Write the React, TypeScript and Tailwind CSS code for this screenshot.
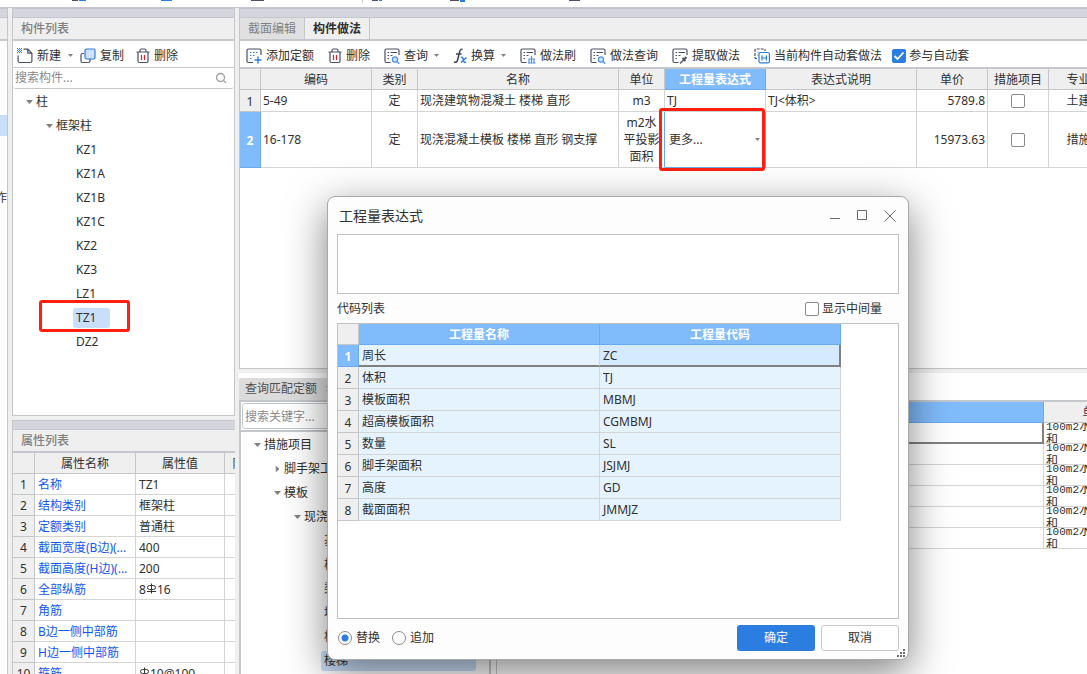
import { useState, type ReactNode } from "react";
import clsx from "clsx";

/* ----------------------------------------
   DATA
----------------------------------------- */

type TreeNode = {
  label: string;
  depth: number;
  state?: "open" | "closed";
};

const componentTree: TreeNode[] = [
  { label: "柱", depth: 0, state: "open" },
  { label: "框架柱", depth: 1, state: "open" },
  { label: "KZ1", depth: 2 },
  { label: "KZ1A", depth: 2 },
  { label: "KZ1B", depth: 2 },
  { label: "KZ1C", depth: 2 },
  { label: "KZ2", depth: 2 },
  { label: "KZ3", depth: 2 },
  { label: "LZ1", depth: 2 },
  { label: "TZ1", depth: 2 },
  { label: "DZ2", depth: 2 },
];

const quotaTree: TreeNode[] = [
  { label: "措施项目", depth: 0, state: "open" },
  { label: "脚手架工程", depth: 1, state: "closed" },
  { label: "模板", depth: 1, state: "open" },
  { label: "现浇混凝土模板", depth: 2, state: "open" },
  { label: "基础", depth: 3 },
  { label: "柱", depth: 3 },
  { label: "梁", depth: 3 },
  { label: "墙", depth: 3 },
  { label: "板", depth: 3 },
  { label: "楼梯", depth: 3 },
];

const properties: { name: string; value: ReactNode }[] = [
  { name: "名称", value: "TZ1" },
  { name: "结构类别", value: "框架柱" },
  { name: "定额类别", value: "普通柱" },
  { name: "截面宽度(B边)(...", value: "400" },
  { name: "截面高度(H边)(...", value: "200" },
  { name: "全部纵筋", value: <>8<RebarMark />16</> },
  { name: "角筋", value: "" },
  { name: "B边一侧中部筋", value: "" },
  { name: "H边一侧中部筋", value: "" },
  { name: "箍筋", value: <><RebarMark />10@100</> },
];

const codes = [
  ["周长", "ZC"],
  ["体积", "TJ"],
  ["模板面积", "MBMJ"],
  ["超高模板面积", "CGMBMJ"],
  ["数量", "SL"],
  ["脚手架面积", "JSJMJ"],
  ["高度", "GD"],
  ["截面面积", "JMMJZ"],
];

const indents = ["pl-[13px]", "pl-[33px]", "pl-[53px]", "pl-[73px]"];

/* ----------------------------------------
   ICONS
----------------------------------------- */

function Svg({ w = 16, children }: { w?: number; children: ReactNode }) {
  return (
    <svg
      width={w}
      height="16"
      viewBox={`0 0 ${w} 16`}
      fill="none"
      stroke="#4a4f66"
      strokeWidth="1.2"
      className="shrink-0"
      aria-hidden="true"
    >
      {children}
    </svg>
  );
}

function RebarMark() {
  return (
    <svg width="11" height="12" viewBox="0 0 11 12" fill="none" stroke="#333" className="mb-1 inline-block">
      <path d="M5.500 0.500v10M1 8.500h9M3.500 2.500h4a2 2 0 0 1 0 4h-4a2 2 0 0 1 0-4" />
    </svg>
  );
}

function Caret({ className }: { className?: string }) {
  return (
    <svg width="7" height="4" viewBox="0 0 7 4" className={clsx("shrink-0", className)} aria-hidden="true">
      <path d="M0 0h7L3.500 4z" fill="#808080" />
    </svg>
  );
}

function MenuCaret({ className }: { className?: string }) {
  return (
    <svg width="5" height="3" viewBox="0 0 5 3" className={clsx("shrink-0", className)} aria-hidden="true">
      <path d="M0 0h5L2.500 3z" fill="#808080" />
    </svg>
  );
}

const NewIcon = () => (
  <Svg>
    <path d="M1.100 7.500v5.500q0 1.500 1.500 1.500h10.800q1.500 0 1.500-1.500V5.200L10.800 1.100H6.500M10.800 1.100v4.100h4.100" />
    <path d="M0 .5h5M0 2.500h5M0 4.500h5" stroke="#2b7de0" strokeWidth="1" strokeDasharray="1 1" />
    <path d="M1 1.500h4M1 3.500h4" stroke="#2b7de0" strokeWidth="1" strokeDasharray="1 1" />
  </Svg>
);

const CopyIcon = () => (
  <Svg>
    <path d="M4 5.500H2.500Q1 5.500 1 7v6q0 1.500 1.500 1.500h6q1.500 0 1.500-1.500v-2" />
    <rect x="5" y="1" width="10" height="10" rx="1.500" fill="#cfe2fb" stroke="#2b7de0" />
  </Svg>
);

const TrashIcon = () => (
  <Svg w={14}>
    <path d="M0.500 4h13M4 4V2.500Q4 1 5.500 1h3Q10 1 10 2.500V4M2 4v9q0 1.500 1.500 1.500h7Q12 14.500 12 13V4" />
    <path d="M5.500 7v5M8.500 7v5" stroke="#d6212b" />
  </Svg>
);

const AddQuotaIcon = () => (
  <Svg>
    <path d="M7 14.500H2.500Q1 14.500 1 13V2.500Q1 1 2.500 1h11Q15 1 15 2.500V7" />
    <path d="M4 4.500h9M4 7.500h6M4 10.500h3" stroke="#2b7de0" strokeDasharray="1.500 1.500" />
    <path d="M12 8.500v7M8.500 12h7" stroke="#2b7de0" strokeWidth="1.400" />
  </Svg>
);

// Shared page outline, each toolbar action adds its own badge in the corner.
function SheetIcon({ children }: { children: ReactNode }) {
  return (
    <Svg>
      <path d="M6.500 14.500H2.500Q1 14.500 1 13V2.500Q1 1 2.500 1h11Q15 1 15 2.500V7" />
      <path d="M3.500 4.500h1.500M6.500 4.500h6.500M3.500 7.500h1.500M6.500 7.500h2M3.500 10.500h1.500" strokeWidth="1" />
      {children}
    </Svg>
  );
}

const QueryIcon = () => (
  <SheetIcon>
    <circle cx="11" cy="11.500" r="2.600" stroke="#4a93ec" fill="#cfe2fb" />
    <path d="M13 13.500l2.200 2.200" stroke="#4a93ec" strokeWidth="1.500" />
  </SheetIcon>
);

const BrushIcon = () => (
  <SheetIcon>
    <path d="M11.500 8v3M8.500 11h6.500M9 11v4.500M11.500 11v4.500M14 11v4.500M8 15h7.500" stroke="#4a93ec" />
  </SheetIcon>
);

const PickIcon = () => (
  <SheetIcon>
    <path d="M8 15.500l4-4" />
    <path d="M10.500 10l3 3M12 11.500l2.500-2.500" strokeWidth="2" />
  </SheetIcon>
);

const AutoIcon = () => (
  <Svg>
    <path d="M3 10.500H2Q1 10.500 1 9.500V2Q1 1 2 1h8q1 0 1 1v1M3.500 4h1M3.500 7h1" strokeDasharray="3 1" />
    <rect x="5" y="4.500" width="10.400" height="10.400" rx="1.500" stroke="#2b7de0" fill="#fff" />
    <path d="M8 7.500v5M12.400 7.500v5M8 10h4.400" stroke="#2b7de0" />
  </Svg>
);

const FxIcon = () => (
  <Svg w={14}>
    <path d="M9.500 1.500Q7.500 0.500 6.700 3.500L4.600 12Q3.900 15.200 1 14M3 6h5.500" stroke="#3c4157" strokeWidth="1.500" />
    <path d="M8 9.500q1.500-.8 2.200 1.500l.8 2.500q.6 1.500 2 .5M13.500 9.500L8 14.500" stroke="#2b7de0" strokeWidth="1.500" />
  </Svg>
);

/* ----------------------------------------
   SMALL PARTS
----------------------------------------- */

function ToolButton({ icon, label, menu }: { icon: ReactNode; label: string; menu?: boolean }) {
  return (
    <button type="button" className="flex shrink-0 items-center gap-1 whitespace-nowrap">
      {icon}
      {label}
      {menu && <MenuCaret className="ml-[2px]" />}
    </button>
  );
}

function CheckBox({ label, hidden, checked }: { label: string; hidden?: boolean; checked?: boolean }) {
  return (
    <label className="inline-flex shrink-0 items-center gap-[3px] whitespace-nowrap align-middle">
      <span className="relative flex">
        <input
          type="checkbox"
          defaultChecked={checked}
          aria-label={label}
          className="peer size-[14px] appearance-none rounded-[2px] border border-[#8a8a8a] bg-white checked:border-[#2b7de0] checked:bg-[#2b7de0]"
        />
        <svg
          viewBox="0 0 14 14"
          className="pointer-events-none absolute inset-0 hidden size-[14px] peer-checked:block"
          fill="none"
          stroke="#fff"
          strokeWidth="1.800"
        >
          <path d="M2.500 7l3 3 6-6.500" />
        </svg>
      </span>
      {!hidden && label}
    </label>
  );
}

function Radio({ label, checked }: { label: string; checked?: boolean }) {
  return (
    <label className="flex items-center gap-1">
      <input
        type="radio"
        name="mode"
        defaultChecked={checked}
        className="size-[14px] appearance-none rounded-full border border-[#8a8a8a] bg-white checked:bg-[radial-gradient(circle,#2b7de0_3px,#fff_4px)]"
      />
      {label}
    </label>
  );
}

function Tree({ nodes, selected, wide }: { nodes: TreeNode[]; selected: string; wide?: boolean }) {
  return (
    <ul className="pt-px">
      {nodes.map((node) => (
        <li key={node.label + node.depth} className={clsx("flex h-6 items-center gap-[3px] whitespace-nowrap", indents[node.depth])}>
          {node.state === "open" && <Caret />}
          {node.state === "closed" && <Caret className="-rotate-90" />}
          {!node.state && <span className="w-[7px] shrink-0" />}
          {node.label === selected ? (
            <span
              className={clsx(
                "relative -ml-[3px] rounded-[3px] bg-[#c9dff9] py-[2px] pl-[3px]",
                wide ? "w-[155px]" : "pr-[14px]",
              )}
            >
              {node.label}
              {!wide && (
                <span className="absolute -top-2 -right-5 -bottom-1 -left-[34px] rounded-[3px] border-[3px] border-[#ff2010]" />
              )}
            </span>
          ) : (
            <span>{node.label}</span>
          )}
        </li>
      ))}
    </ul>
  );
}

function Grip() {
  return <div className="h-[10px] shrink-0 border-y border-[#c4c6cd] bg-[#d5d6dd]" />;
}

function PanelTitle({ children }: { children: ReactNode }) {
  return (
    <h2 className="h-[23px] shrink-0 border-b-2 border-[#c4c7cb] bg-[#efefef] pl-2 font-medium leading-[22px] text-[#808080]">
      {children}
    </h2>
  );
}

/* ----------------------------------------
   LEFT COLUMN
----------------------------------------- */

function ComponentList() {
  return (
    <section className="flex h-[408px] shrink-0 flex-col border-x border-b border-[#c4c6c9] bg-white">
      <Grip />
      <PanelTitle>构件列表</PanelTitle>
      <div className="flex h-[27px] shrink-0 items-center border-b border-[#c4c7cb] pt-[3px] pl-1">
        <ToolButton icon={<NewIcon />} label="新建" />
        <span className="px-[7px]">
          <MenuCaret />
        </span>
        <div className="flex gap-3">
          <ToolButton icon={<CopyIcon />} label="复制" />
          <ToolButton icon={<TrashIcon />} label="删除" />
        </div>
      </div>
      <div className="flex h-[21px] shrink-0 items-center rounded-[3px] border-b border-[#c4c7cb] pr-[7px]">
        <input aria-label="搜索构件" placeholder="搜索构件..." className="min-w-0 flex-1 px-[2px] outline-none placeholder:text-[#8a8a8a]" />
        <svg width="12" height="12" viewBox="0 0 12 12" fill="none" stroke="#a0a0a0" strokeWidth="1.300">
          <circle cx="5.500" cy="5.500" r="4" />
          <path d="M8.500 8.500l2.500 2.500" />
        </svg>
      </div>
      <Tree nodes={componentTree} selected="TZ1" />
    </section>
  );
}

const propHead = "h-[21px] border-r border-b border-[#c4c6c9] bg-[#efefef] p-0 pt-[2px] font-normal";
const propCell = "h-[21px] overflow-hidden border-r border-b border-[#d4d4d4] p-0 pt-[2px] pl-[3px] whitespace-nowrap";

function PropertyList() {
  return (
    <section className="min-h-0 flex-1 overflow-hidden border-l border-[#c4c6c9] bg-white">
      <Grip />
      <PanelTitle>属性列表</PanelTitle>
      <table className="w-[252px] table-fixed border-separate border-spacing-0">
        <colgroup>
          <col className="w-[22px]" />
          <col className="w-[101px]" />
          <col className="w-[89px]" />
          <col className="w-10" />
        </colgroup>
        <thead>
          <tr>
            <th className={propHead} />
            <th className={propHead}>属性名称</th>
            <th className={propHead}>属性值</th>
            <th className={propHead}>附加</th>
          </tr>
        </thead>
        <tbody>
          {properties.map((prop, i) => (
            <tr key={prop.name}>
              <th className={propHead}>{i + 1}</th>
              <td className={clsx(propCell, "text-[#1257f0]")}>{prop.name}</td>
              <td className={propCell}>
                <div className="h-4">{prop.value}</div>
              </td>
              <td className={propCell} />
            </tr>
          ))}
        </tbody>
      </table>
    </section>
  );
}

/* ----------------------------------------
   METHOD TABLE
----------------------------------------- */

const head = "h-[21px] border-r border-b border-[#c4c6c9] bg-[#efefef] p-0 pt-[2px] font-normal whitespace-nowrap";
const blueHead = "h-[21px] border-r border-b border-[#69a9ee] bg-[#80bbfb] p-0 pt-[2px] font-bold text-white";
const cell = "border-r border-b border-[#d4d4d4] p-0 px-[2px]";

function MethodTable() {
  return (
    <table className="w-[869px] table-fixed border-separate border-spacing-0">
      <colgroup>
        <col className="w-[21px]" />
        <col className="w-[111px]" />
        <col className="w-[46px]" />
        <col className="w-[201px]" />
        <col className="w-[46px]" />
        <col className="w-[101px]" />
        <col className="w-[151px]" />
        <col className="w-[71px]" />
        <col className="w-[61px]" />
        <col className="w-[60px]" />
      </colgroup>
      <thead>
        <tr>
          <th className={head} />
          <th className={head}>编码</th>
          <th className={head}>类别</th>
          <th className={head}>名称</th>
          <th className={head}>单位</th>
          <th className={blueHead}>工程量表达式</th>
          <th className={head}>表达式说明</th>
          <th className={head}>单价</th>
          <th className={head}>措施项目</th>
          <th className={head}>专业</th>
        </tr>
      </thead>
      <tbody>
        <tr className="h-[22px]">
          <th className={head}>1</th>
          <td className={cell}>5-49</td>
          <td className={clsx(cell, "text-center")}>定</td>
          <td className={cell}>现浇建筑物混凝土 楼梯 直形</td>
          <td className={clsx(cell, "text-center")}>m3</td>
          <td className={cell}>TJ</td>
          <td className={cell}>TJ&lt;体积&gt;</td>
          <td className={clsx(cell, "text-right")}>5789.8</td>
          <td className={clsx(cell, "text-center leading-none")}>
            <CheckBox label="措施项目 1" hidden />
          </td>
          <td className={clsx(cell, "text-center")}>土建</td>
        </tr>
        <tr className="h-14">
          <th className={blueHead}>2</th>
          <td className={cell}>16-178</td>
          <td className={clsx(cell, "text-center")}>定</td>
          <td className={cell}>现浇混凝土模板 楼梯 直形 钢支撑</td>
          <td className="border-r border-b border-r-[#69a9ee] border-b-[#d4d4d4] p-0 text-center leading-[17px]">
            m2水
            <br />
            平投影
            <br />
            面积
          </td>
          <td className="relative border-r border-b border-[#69a9ee] p-0">
            <select aria-label="工程量表达式" className="w-full appearance-none bg-white pl-1 outline-none">
              <option>更多...</option>
            </select>
            <span className="pointer-events-none absolute inset-y-0 right-[5px] flex items-center">
              <MenuCaret />
            </span>
            <span className="pointer-events-none absolute -inset-y-1 right-0 -left-[6px] rounded-[3px] border-[3px] border-[#ff2010]" />
          </td>
          <td className={cell} />
          <td className={clsx(cell, "text-right")}>15973.63</td>
          <td className={clsx(cell, "text-center leading-none")}>
            <CheckBox label="措施项目 2" hidden />
          </td>
          <td className={clsx(cell, "text-center")}>措施</td>
        </tr>
      </tbody>
    </table>
  );
}

function MethodPanel() {
  return (
    <section className="flex h-[361px] shrink-0 flex-col border-b border-l border-[#c4c6c9] bg-white">
      <Grip />
      <div className="flex h-[23px] shrink-0 border-b-2 border-[#c4c7cb] bg-[#efefef]">
        <button type="button" className="border-r border-[#c4c6c9] bg-[#e0e0e0] px-2 pt-px text-[#808080]">
          截面编辑
        </button>
        <button type="button" className="border-r border-[#c4c6c9] px-2 pt-px font-bold">
          构件做法
        </button>
      </div>
      <div className="flex h-7 shrink-0 items-center gap-[14px] overflow-hidden border-b-2 border-[#c4c7cb] pt-[3px] pl-[6px]">
        <ToolButton icon={<AddQuotaIcon />} label="添加定额" />
        <ToolButton icon={<TrashIcon />} label="删除" />
        <ToolButton icon={<QueryIcon />} label="查询" menu />
        <ToolButton icon={<FxIcon />} label="换算" menu />
        <ToolButton icon={<BrushIcon />} label="做法刷" />
        <ToolButton icon={<QueryIcon />} label="做法查询" />
        <ToolButton icon={<PickIcon />} label="提取做法" />
        <div className="flex items-center gap-[10px]">
          <ToolButton icon={<AutoIcon />} label="当前构件自动套做法" />
          <CheckBox label="参与自动套" checked />
        </div>
      </div>
      <div className="min-h-0 flex-1 overflow-hidden">
        <MethodTable />
      </div>
    </section>
  );
}

/* ----------------------------------------
   QUOTA QUERY PANEL
----------------------------------------- */

function QuotaPanel() {
  return (
    <section className="mt-1 flex min-h-0 flex-1 flex-col bg-white">
      <div className="flex h-[29px] shrink-0 items-end border-b-2 border-[#c4c7cb]">
        <button type="button" className="flex h-[22px] items-center gap-2 rounded-t-[3px] bg-[#dcdcdc] px-[6px] text-[#505050]">
          查询匹配定额
          <span className="text-[#a0a0a0]">×</span>
        </button>
      </div>
      <div className="flex min-h-0 flex-1">
        <div className="w-[252px] shrink-0 overflow-hidden border-x-2 border-[#c4c7cb]">
          <div className="h-[30px] border-b-2 border-[#c4c7cb] p-px">
            <input
              aria-label="搜索关键字"
              placeholder="搜索关键字..."
              className="h-[26px] w-full rounded-[3px] border border-[#c4c7cb] px-[2px] outline-none placeholder:text-[#8a8a8a]"
            />
          </div>
          <Tree nodes={quotaTree} selected="楼梯" wide />
        </div>
        <div className="ml-[5px] min-w-0 flex-1 overflow-hidden border-l border-[#c4c7cb]">
          <table className="w-[649px] table-fixed border-separate border-spacing-0">
            <colgroup>
              <col />
              <col className="w-[102px]" />
            </colgroup>
            <thead>
              <tr>
                <th className={blueHead}>名称</th>
                <th className={head}>单位</th>
              </tr>
            </thead>
            <tbody>
              {[0, 1, 2, 3, 4, 5].map((row) => (
                <tr key={row}>
                  <td
                    className={clsx(
                      "h-[21px] p-0",
                      row === 0 ? "border-r-2 border-b-2 border-[#808080]" : "border-r border-b border-[#d4d4d4]",
                    )}
                  />
                  <td className="h-[21px] border-r border-b border-[#d4d4d4] p-0 pl-[2px]">
                    <div className="flex h-5 flex-col justify-center overflow-hidden leading-[14px] whitespace-nowrap">
                      <span className="shrink-0">
                        <span className="font-['Liberation_Mono'] text-[11px] leading-none">100m2</span>水
                      </span>
                      <span className="shrink-0">和</span>
                    </div>
                  </td>
                </tr>
              ))}
            </tbody>
          </table>
        </div>
      </div>
    </section>
  );
}

/* ----------------------------------------
   EXPRESSION DIALOG
----------------------------------------- */

function ExpressionDialog() {
  const [active, setActive] = useState(0);

  return (
    <div
      role="dialog"
      aria-label="工程量表达式"
      className="absolute top-[196px] left-[327px] w-[582px] rounded-lg border border-[#a8a8a8] bg-[#fdfdfd] px-[9px] pb-[2px] shadow-[0_12px_40px_rgba(0,0,0,0.5)]"
    >
      <header className="flex h-[37px] items-center justify-between">
        <h1 className="pl-[2px] text-sm text-[#333]">工程量表达式</h1>
        <div className="flex gap-[17px] pr-[3px]">
          <button type="button" aria-label="最小化">
            <svg width="10" height="12" viewBox="0 0 10 12" stroke="#6a6a6a">
              <path d="M0 8.500h10" />
            </svg>
          </button>
          <button type="button" aria-label="最大化">
            <svg width="10" height="12" viewBox="0 0 10 12" fill="none" stroke="#6a6a6a">
              <path d="M.5 .5h9v9h-9z" />
            </svg>
          </button>
          <button type="button" aria-label="关闭">
            <svg width="12" height="12" viewBox="0 0 12 12" stroke="#6a6a6a">
              <path d="M.5 .5l11 11M11.500 .5l-11 11" />
            </svg>
          </button>
        </div>
      </header>

      <textarea aria-label="表达式" className="block h-[60px] w-full resize-none border border-[#c0c0c0] bg-white outline-none" />

      <div className="flex h-[29px] items-center justify-between pr-[17px]">
        <span>代码列表</span>
        <CheckBox label="显示中间量" />
      </div>

      <div className="h-[296px] border border-[#c0c0c0] bg-white">
        <table className="w-[503px] table-fixed border-separate border-spacing-0">
          <colgroup>
            <col className="w-[21px]" />
            <col className="w-[241px]" />
            <col className="w-[241px]" />
          </colgroup>
          <thead>
            <tr>
              <th className={head} />
              <th className={blueHead}>工程量名称</th>
              <th className={blueHead}>工程量代码</th>
            </tr>
          </thead>
          <tbody>
            {codes.map(([name, code], i) => {
              const on = i === active;
              return (
                <tr key={code} className="h-[22px]" onClick={() => setActive(i)}>
                  <th className={on ? blueHead : head}>{i + 1}</th>
                  <td
                    className={clsx(
                      "border-r border-r-[#d4d4d4] bg-[#e5f3ff] p-0 pl-[3px]",
                      on ? "border-b-2 border-b-[#808080] pt-px" : "border-b border-b-[#d4d4d4]",
                    )}
                  >
                    {name}
                  </td>
                  <td
                    className={clsx(
                      "p-0 pl-[3px]",
                      on
                        ? "border-r-2 border-b-2 border-[#808080] bg-[#d6eaff] pt-px"
                        : "border-r border-b border-[#d4d4d4] bg-[#e5f3ff]",
                    )}
                  >
                    {code}
                  </td>
                </tr>
              );
            })}
          </tbody>
        </table>
      </div>

      <footer className="flex h-[38px] items-center justify-between pl-px">
        <div className="flex gap-3">
          <Radio label="替换" checked />
          <Radio label="追加" />
        </div>
        <div className="flex gap-[6px]">
          <button type="button" className="h-[26px] w-[78px] rounded-[3px] bg-[#2b7de0] text-white">
            确定
          </button>
          <button type="button" className="h-[26px] w-[78px] rounded-[3px] border border-[#c8c8c8] bg-white">
            取消
          </button>
        </div>
      </footer>
      <svg width="8" height="8" viewBox="0 0 8 8" fill="#707070" className="absolute right-[3px] bottom-[2px]" aria-hidden="true">
        <path d="M6 0h2v2H6zM3 3h2v2H3zM6 3h2v2H6zM0 6h2v2H0zM3 6h2v2H3zM6 6h2v2H6z" />
      </svg>
    </div>
  );
}

/* ----------------------------------------
   PAGE
----------------------------------------- */

export default function App() {
  return (
    <div className="relative flex h-screen flex-col overflow-hidden bg-[#efefef] font-['Noto_Sans','Noto_Sans_CJK_SC',sans-serif] text-xs text-[#303030]">
      {/* lower edge of the ribbon */}
      <svg width="100%" height="8" className="block shrink-0 bg-white" aria-hidden="true">
        <path d="M72 0h6v1h-6zM251 0h13v1h-13zM372 0h6v1h-6zM450 0h9v1h-9zM569 0h11v1h-11z" fill="#4a4f66" />
        <path d="M79 0h7v1h-7zM161 0h11v1h-11zM379 0h3v1h-3zM460 0h5v2h-5z" fill="#2b7de0" />
        <path d="M362 0h1v3h-1z" fill="#ccc" />
        <path d="M0 7h4000v1H0z" fill="#c4c6cd" />
      </svg>

      <div className="flex min-h-0 flex-1">
        {/* sliver of the navigation panel */}
        <div className="w-2 shrink-0 overflow-hidden border-r border-[#c4c6c9] bg-white">
          <Grip />
          <div className="h-[23px] border-b-2 border-[#c4c7cb] bg-[#efefef]" />
          <div className="mt-[74px] h-[21px] bg-[#c9dff9]" />
          <div className="mt-[54px] flex justify-end">作</div>
        </div>

        <div className="ml-1 flex w-[223px] shrink-0 flex-col gap-1">
          <ComponentList />
          <PropertyList />
        </div>

        <main className="ml-1 flex min-w-0 flex-1 flex-col">
          <MethodPanel />
          <QuotaPanel />
        </main>
      </div>

      <ExpressionDialog />
    </div>
  );
}
